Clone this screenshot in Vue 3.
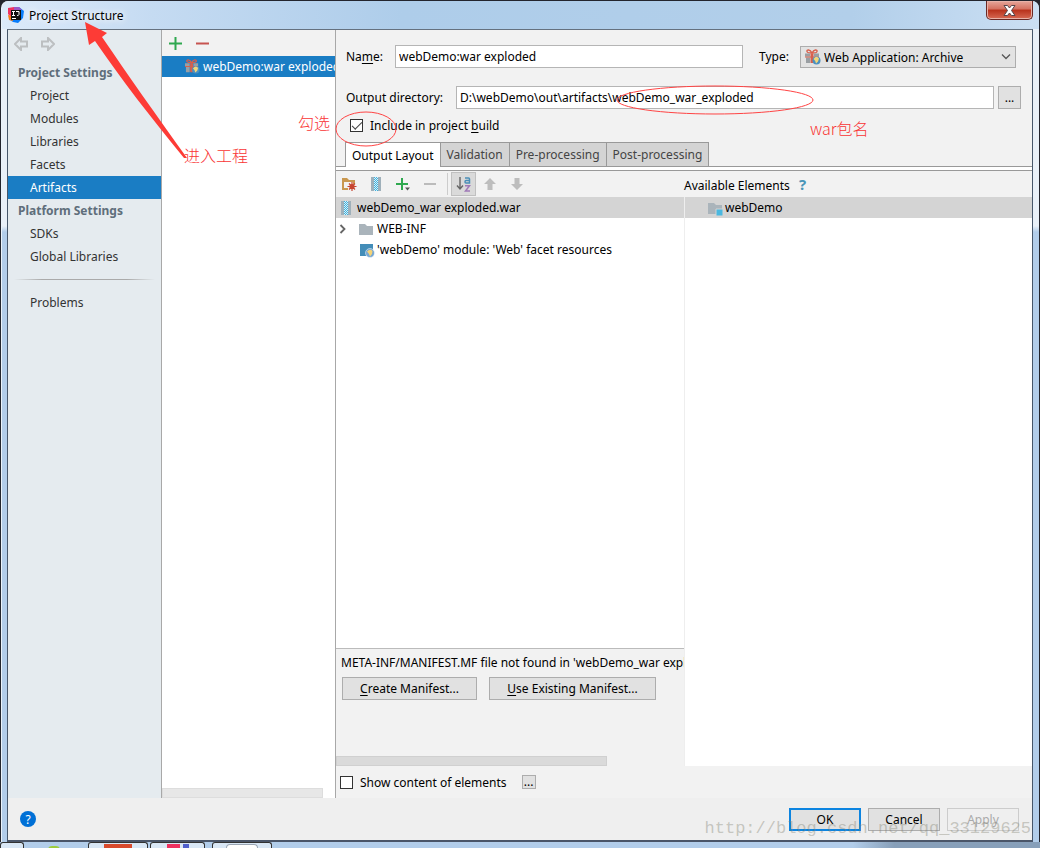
<script setup>
import { ref } from 'vue'

const projectItems = ['Project', 'Modules', 'Libraries', 'Facets', 'Artifacts']
const platformItems = ['SDKs', 'Global Libraries']
const selected = ref('Artifacts')
const tabs = ['Output Layout', 'Validation', 'Pre-processing', 'Post-processing']
const activeTab = ref('Output Layout')
const name = ref('webDemo:war exploded')
const directory = ref('D:\\webDemo\\out\\artifacts\\webDemo_war_exploded')
const includeInBuild = ref(true)
const showContent = ref(false)
</script>

<template>
  <div class="screen">
    <svg class="defs" aria-hidden="true">
      <defs>
        <symbol id="gift" viewBox="0 0 16 16">
          <path d="M7 4C5 0 1.500 .5 2 2.600C2.300 3.800 5 4 7 4C9 4 11.700 3.800 12 2.600C12.500 .5 9 0 7 4Z" fill="none" stroke="#d8604c" stroke-width="1.400" />
          <path d="M0 4.500h5v3H0zM9 4.500h5v3H9zM1 8.500h4V14H1zM9 8.500h4V14H9z" fill="#9a9fa3" />
          <path d="M5.500 4.500h3V14h-3zM0 7.500h14v1H0z" fill="#d8604c" />
          <circle cx="11.500" cy="11.500" r="4" fill="#4a90c2" />
          <path d="M8.500 10q3-4 5.500-.5l-1 3-2 2-.8-2.500z" fill="#f3d678" />
        </symbol>
        <symbol id="archive" viewBox="0 0 12 16">
          <path d="M1 1h10v14H1z" fill="#9fb0ba" />
          <path d="M4 1h4v14H4z" fill="#d9f1fa" />
          <path d="M4 1h1v1H4zM6 1h1v1H6zM5 2h1v1H5zM7 2h1v1H7zM4 3h1v1H4zM6 3h1v1H6zM5 4h1v1H5zM7 4h1v1H7zM4 5h1v1H4zM6 5h1v1H6zM5 6h1v1H5zM7 6h1v1H7zM4 7h1v1H4zM6 7h1v1H6zM5 8h1v1H5zM7 8h1v1H7zM4 9h1v1H4zM6 9h1v1H6zM5 10h1v1H5zM7 10h1v1H7zM4 11h1v1H4zM6 11h1v1H6zM5 12h1v1H5zM7 12h1v1H7zM4 13h1v1H4zM6 13h1v1H6zM5 14h1v1H5zM7 14h1v1H7z" fill="#3fb0dd" />
        </symbol>
        <symbol id="folder" viewBox="0 0 16 16">
          <path d="M1 3h6l2 2h6v9H1z" fill="#aab4bb" />
        </symbol>
        <symbol id="arrow" viewBox="0 0 14 14">
          <path d="M1 7l6-6v3.500h6v5H7V13z" />
        </symbol>
      </defs>
    </svg>

    <div class="window">
      <header class="titlebar">
        <svg class="logo" width="16" height="16" viewBox="0 0 16 16">
          <path d="M0 1L6 0l3 4-5 9-3-1 1-3-2-2z" fill="#ee315f" />
          <path d="M7 0l4 0 5 4-1 7-5 5-5-1-3-2 8-6z" fill="#087cfa" />
          <path d="M0 8l4 1 1 5-4-1z" fill="#f97a12" />
          <path d="M6 0l5 0 3 3H6z" fill="#9b55c4" />
          <path d="M3 3h10v10H3z" fill="#101010" />
          <path d="M4 4.500h3M5.500 4.500v4M4 8.500h3M8 4.500h3v3q0 1-2 1M4 11.500h4" stroke="#fff" fill="none" />
        </svg>
        <h1>Project Structure</h1>
        <button class="close" aria-label="Close">
          <svg width="13" height="11" viewBox="0 0 13 11">
            <path d="M1 .5h3.500L6.500 3 8.500 .5H12L8.500 5.500 12 10.500H8.500L6.500 8 4.500 10.500H1L4.500 5.500z" fill="#fff" stroke="#55454a" />
          </svg>
        </button>
      </header>

      <div class="client">
        <div class="columns">
          <nav class="sidebar">
            <div class="history">
              <button aria-label="Back"><svg width="14" height="14"><use href="#arrow" /></svg></button>
              <button aria-label="Forward"><svg class="flip" width="14" height="14"><use href="#arrow" /></svg></button>
            </div>
            <h2>Project Settings</h2>
            <a v-for="i in projectItems" :key="i" href="#" :class="{ on: i === selected }" @click.prevent="selected = i">{{ i }}</a>
            <h2>Platform Settings</h2>
            <a v-for="i in platformItems" :key="i" href="#" :class="{ on: i === selected }" @click.prevent="selected = i">{{ i }}</a>
            <div class="rule"></div>
            <a href="#" @click.prevent="selected = 'Problems'">Problems</a>
          </nav>

          <section class="artifacts">
            <div class="list-tools">
              <button aria-label="Add"><svg width="13" height="13"><path d="M6.500 0v13M0 6.500h13" stroke="#2fa84f" stroke-width="2" /></svg></button>
              <button aria-label="Remove"><svg width="13" height="13"><path d="M0 6.500h13" stroke="#c75450" stroke-width="2" /></svg></button>
            </div>
            <div class="artifact">
              <svg width="15" height="15"><use href="#gift" /></svg>
              <span>webDemo:war exploded</span>
            </div>
            <div class="fill"></div>
            <div class="list-scroll"></div>
          </section>

          <main class="editor">
            <div class="row name-row">
              <label for="name">Na<u>m</u>e:</label>
              <input id="name" v-model="name" type="text" />
              <label for="type">Type:</label>
              <div class="select">
                <select id="type">
                  <option>Web Application: Archive</option>
                </select>
                <svg class="gift" width="16" height="16"><use href="#gift" /></svg>
                <svg class="chevron" width="10" height="6"><path d="M1 .5l4 4 4-4" fill="none" stroke="#555" stroke-width="1.300" /></svg>
              </div>
            </div>
            <div class="row dir-row">
              <label for="dir">Output directory:</label>
              <input id="dir" v-model="directory" type="text" />
              <button class="btn browse" aria-label="Browse">...</button>
            </div>
            <div class="check-row">
              <input id="include" v-model="includeInBuild" type="checkbox" />
              <label for="include">Include in project <u>b</u>uild</label>
            </div>
            <div class="tabs" role="tablist">
              <button v-for="t in tabs" :key="t" role="tab" :aria-selected="t === activeTab" :class="{ on: t === activeTab }" @click="activeTab = t">{{ t }}</button>
            </div>

            <div class="panes">
              <section class="layout">
                <div class="tools">
                  <button aria-label="New folder">
                    <svg width="16" height="16">
                      <path d="M1 2h5l2 2h6v4h-2V6H3v6h4v2H1z" fill="#c9974f" />
                      <path d="M11 6v9M6.500 10.500h9M8 7.500l6 6M14 7.500l-6 6" stroke="#c7452f" stroke-width="1.200" />
                      <circle cx="11" cy="10.500" r="2.600" fill="#c7452f" />
                    </svg>
                  </button>
                  <button aria-label="New archive"><svg width="12" height="16"><use href="#archive" /></svg></button>
                  <button aria-label="Add copy of">
                    <svg width="16" height="16"><path d="M7 2v12M1 8h12" stroke="#2fa84f" stroke-width="2" /><path d="M10 11.500h5l-2.500 3z" fill="#555" /></svg>
                  </button>
                  <button aria-label="Remove element"><svg width="12" height="16"><path d="M0 8h12" stroke="#bbb" stroke-width="2" /></svg></button>
                  <span class="divider"></span>
                  <button class="pressed" aria-label="Sort elements">
                    <svg width="16" height="18" viewBox="0 0 16 18">
                      <path d="M4 2v12M1 10.500l3 3.500 3-3.500" fill="none" stroke="#666" stroke-width="1.400" />
                      <path d="M9 3h3.500q1 0 1 1v4H10q-1 0-1-1 0-1.500 1-1.500h3.500" fill="none" stroke="#4a8fb8" stroke-width="1.500" />
                      <path d="M9 10.800h4.500L9.500 16H14" fill="none" stroke="#a07ab8" stroke-width="1.500" />
                    </svg>
                  </button>
                  <button aria-label="Move up"><svg class="up" width="14" height="14"><use href="#arrow" fill="#bdbdbd" /></svg></button>
                  <button aria-label="Move down"><svg class="down" width="14" height="14"><use href="#arrow" fill="#bdbdbd" /></svg></button>
                </div>
                <ul class="tree">
                  <li class="root on"><svg width="12" height="16"><use href="#archive" /></svg>webDemo_war exploded.war</li>
                  <li class="branch">
                    <svg width="8" height="10"><path d="M1.500 1l4 4-4 4" fill="none" stroke="#666" stroke-width="1.800" /></svg>
                    <svg width="16" height="16"><use href="#folder" /></svg>WEB-INF
                  </li>
                  <li class="leaf">
                    <svg width="16" height="16">
                      <path d="M1 2h13v12H1z" fill="#438db8" />
                      <circle cx="11" cy="11" r="4.500" fill="#76a7d3" stroke="#fff" stroke-width=".5" />
                      <path d="M8 9.500q3-3 5.500-.5l-.5 3-2 2.500-1-2.500z" fill="#f5d377" />
                    </svg>'webDemo' module: 'Web' facet resources
                  </li>
                </ul>
                <div class="manifest">
                  <p>META-INF/MANIFEST.MF file not found in 'webDemo_war exploded.war'</p>
                  <div class="manifest-actions">
                    <button class="btn create"><u>C</u>reate Manifest...</button>
                    <button class="btn existing"><u>U</u>se Existing Manifest...</button>
                  </div>
                  <div class="hscroll"></div>
                </div>
              </section>

              <section class="available">
                <div class="available-head">Available Elements <a href="#" aria-label="Help on available elements" @click.prevent>?</a></div>
                <ul class="tree">
                  <li class="module on">
                    <svg width="16" height="16"><use href="#folder" /><path d="M9 9h7v7H9z" fill="#4ab8e0" stroke="#d4d4d4" /></svg>webDemo
                  </li>
                </ul>
              </section>
            </div>

            <div class="content-row">
              <input id="content" v-model="showContent" type="checkbox" />
              <label for="content">Show content of elements</label>
              <button class="btn more" aria-label="Content options">...</button>
            </div>
          </main>
        </div>

        <footer class="footer">
          <button class="help" aria-label="Help">?</button>
          <button class="btn ok">OK</button>
          <button class="btn">Cancel</button>
          <button class="btn" disabled>Apply</button>
        </footer>
      </div>
    </div>

    <div class="taskbar">
      <span class="task first"></span>
      <span class="green"></span>
      <span class="task app"><i class="red"></i></span>
      <span class="task idea"><i class="pink"></i><i class="blue"></i></span>
      <span class="task cloud"><i class="white"></i></span>
    </div>

    <svg class="marks" width="1040" height="848" viewBox="0 0 1040 848" aria-hidden="true">
      <path d="M85 22L107 33 102 37C128 75 156 115 187 158L184 158C152 119 121 79 95 41L89 45z" fill="#fd3b36" />
      <ellipse cx="366" cy="129" rx="30" ry="17" />
      <ellipse cx="715" cy="100" rx="98" ry="14" />
    </svg>
    <span class="note enter">进入工程</span>
    <span class="note tick">勾选</span>
    <span class="note package">war包名</span>
    <span class="watermark">http://blog.csdn.net/qq_33129625</span>
  </div>
</template>

<style>
body {
  margin: 0;
}
</style>

<style scoped>
* {
  box-sizing: border-box;
}
.screen {
  position: relative;
  min-height: 100vh;
  display: flex;
  flex-direction: column;
  overflow: hidden;
  background: #23252e;
  font: 12px/21px "Noto Sans", "Open Sans", "Noto Sans CJK SC", sans-serif;
  color: #000;
}
.defs {
  position: absolute;
  width: 0;
  height: 0;
}
button,
input,
select {
  font: inherit;
  color: inherit;
  margin: 0;
}
button {
  display: flex;
  align-items: center;
  justify-content: center;
  padding: 0;
  border: 0;
  background: none;
}
svg {
  flex: none;
}
u {
  text-underline-offset: 2px;
}
.window {
  flex: 1;
  display: flex;
  flex-direction: column;
  margin: 1px 1px 0;
  padding: 0 6px 0 5px;
  border-radius: 7px 7px 0 0;
  border-left: 1px solid #eaf3fb;
  background: linear-gradient(#e9f0f8 0, #e9f0f8 225px, #b2cdea 231px);
  background-origin: border-box;
}
.titlebar {
  display: flex;
  align-items: center;
  height: 28px;
  margin: 0 -6px 0 -5px;
  padding: 0 6px;
  border-radius: 7px 7px 0 0;
  background: linear-gradient(90deg, #dceafa 0, #c5dbf2 150px, #aecdea 400px, #b2cfea 82%, #cbdff3);
}
h1 {
  flex: 1;
  margin: 0 0 0 5px;
  font-size: 12px;
  font-weight: 400;
  color: #000;
  text-shadow: 0 0 6px #fff, 0 0 10px #fff;
}
.close {
  align-self: flex-start;
  width: 47px;
  height: 19px;
  border: 1px solid #6a2925;
  border-top: 0;
  border-radius: 0 0 5px 5px;
  background: linear-gradient(#e6a79b 0, #d4705f 45%, #b8311b 50%, #d76a54);
  box-shadow: inset 0 0 0 1px #e8b2a8;
}
.client {
  flex: 1;
  display: flex;
  flex-direction: column;
  border: 1px solid #46566a;
  border-top-color: #65717f;
  border-bottom: 2px solid #4a5568;
  background: #efefef;
}
.columns {
  flex: 1;
  display: grid;
  grid-template-columns: 154px 174px minmax(0, 1fr);
}
.sidebar {
  display: flex;
  flex-direction: column;
  border-right: 1px solid #a8a8a8;
  background: #e5ebef;
}
.history {
  display: flex;
  gap: 13px;
  height: 31px;
  padding: 0 0 4px 6px;
  fill: none;
  stroke: #bcbfc1;
  stroke-width: 2;
}
.flip {
  transform: rotate(180deg);
}
.up {
  transform: rotate(90deg);
}
.down {
  transform: rotate(-90deg);
}
.sidebar h2 {
  margin: 0;
  padding-left: 10px;
  font-size: 12px;
  line-height: 23px;
  color: #5f6e7b;
}
.sidebar a {
  padding-left: 22px;
  line-height: 23px;
  color: #333;
  text-decoration: none;
}
.sidebar a.on {
  background: #1a7dc4;
  color: #fff;
}
.rule {
  height: 1px;
  margin: 11px 6px;
  background: linear-gradient(90deg, transparent, #aaa 20%, #aaa 80%, transparent);
}
.artifacts {
  display: flex;
  flex-direction: column;
  border-right: 1px solid #a8a8a8;
  background: #fff;
}
.list-tools {
  display: flex;
  gap: 14px;
  height: 26px;
  padding-left: 7px;
  background: #f2f2f2;
}
.artifact {
  display: flex;
  align-items: center;
  gap: 3px;
  height: 21px;
  padding-left: 23px;
  overflow: hidden;
  white-space: nowrap;
  background: #1a7dc4;
  color: #fff;
}
.fill {
  flex: 1;
}
.list-scroll {
  height: 10px;
  margin-right: 12px;
  border: 1px solid #ddd;
  background: #e7e7e7;
}
.editor {
  display: flex;
  flex-direction: column;
  background: #f2f2f2;
}
.row {
  display: flex;
  align-items: center;
  padding-left: 10px;
}
input[type="text"] {
  flex: 1;
  min-width: 0;
  height: 23px;
  padding: 0 3px;
  border: 1px solid #b5b5b5;
  background: #fff;
}
.name-row {
  margin-top: 15px;
  padding-right: 16px;
}
.name-row label:first-child {
  width: 49px;
}
.name-row label:nth-of-type(2) {
  width: 57px;
  padding-left: 16px;
}
.select {
  position: relative;
  width: 216px;
}
select {
  appearance: none;
  display: block;
  width: 100%;
  height: 22px;
  padding: 0 24px 0 23px;
  border: 1px solid #adadad;
  border-radius: 0;
  background: #e3e3e3;
}
.gift {
  position: absolute;
  left: 5px;
  top: 3px;
}
.chevron {
  position: absolute;
  right: 5px;
  top: 8px;
}
.dir-row {
  margin-top: 18px;
  padding-right: 11px;
}
.dir-row label {
  width: 110px;
}
.btn {
  border: 1px solid #adadad;
  background: #e1e1e1;
}
.browse {
  width: 23px;
  height: 23px;
  margin-left: 4px;
}
.check-row {
  display: flex;
  align-items: center;
  gap: 7px;
  height: 33px;
  padding-left: 14px;
}
input[type="checkbox"] {
  appearance: none;
  display: grid;
  place-items: center;
  width: 13px;
  height: 13px;
  border: 1px solid #333;
  background: #fff;
}
input[type="checkbox"]:checked::after {
  content: "";
  width: 9px;
  height: 4px;
  margin-bottom: 3px;
  border: solid #444;
  border-width: 0 0 1px 1px;
  transform: rotate(-45deg);
}
.tabs {
  display: flex;
  padding-left: 9px;
  border-bottom: 1px solid #999;
}
.tabs button {
  height: 24px;
  padding: 0 6px;
  border: 1px solid #999;
  border-width: 1px 1px 0 0;
  background: #d4d4d4;
  color: #444;
  white-space: nowrap;
}
.tabs .on {
  border-left-width: 1px;
  margin-bottom: -1px;
  height: 25px;
  background: #fff;
  color: #000;
}
.panes {
  flex: 1;
  display: grid;
  grid-template-columns: minmax(0, 1fr) minmax(0, 1fr);
  border-top: 1px solid #999;
  box-shadow: 0 -3px #fff;
  margin-top: 3px;
}
.layout {
  display: flex;
  flex-direction: column;
  background: #fff;
}
.tools {
  display: flex;
  align-items: center;
  height: 26px;
  padding-left: 5px;
  background: #f2f2f2;
}
.tools button {
  width: 27px;
  height: 24px;
}
.tools button:first-child {
  width: 16px;
  margin-right: 5px;
}
.divider {
  width: 1px;
  height: 22px;
  margin: 0 3px 0 4px;
  background: #ccc;
}
.tools .pressed {
  width: 25px;
  border: 1px solid #c0c0c0;
  background: #dadada;
}
.tree {
  margin: 0;
  padding: 0;
  list-style: none;
}
.tree li {
  display: flex;
  align-items: center;
  height: 21px;
  white-space: nowrap;
}
.tree .on {
  background: #d4d4d4;
}
.root {
  gap: 5px;
  padding-left: 4px;
}
.branch {
  gap: 3px;
  padding-left: 3px;
}
.branch svg:first-child {
  margin-right: 8px;
}
.leaf {
  gap: 2px;
  padding-left: 23px;
}
.module {
  gap: 2px;
  padding-left: 22px;
}
.manifest {
  display: flex;
  flex-direction: column;
  height: 118px;
  margin-top: auto;
  border-top: 1px solid #bbb;
  background: #f2f2f2;
}
.manifest p {
  margin: 3px 0 4px;
  padding-left: 5px;
  overflow: hidden;
  white-space: nowrap;
}
.manifest-actions {
  display: flex;
  gap: 12px;
  padding-left: 6px;
}
.manifest-actions .btn {
  display: block;
  height: 23px;
  line-height: 20px;
}
.create {
  width: 135px;
}
.existing {
  width: 167px;
}
.hscroll {
  width: 78%;
  height: 10px;
  margin-top: auto;
  border: 1px solid #d0d0d0;
  background: #dadada;
}
.available {
  border-left: 1px solid #eee;
  background: #fff;
}
.available-head {
  height: 26px;
  margin-left: -1px;
  line-height: 26px;
  background: #f2f2f2;
}
.available-head a {
  margin-left: 6px;
  font-size: 15px;
  font-weight: 700;
  color: #4a95b8;
  text-decoration: none;
}
.content-row {
  display: flex;
  align-items: center;
  gap: 7px;
  height: 32px;
  padding-left: 4px;
}
.more {
  width: 14px;
  height: 14px;
  margin-left: 8px;
  line-height: 10px;
}
.footer {
  display: flex;
  align-items: center;
  gap: 7px;
  height: 42px;
  padding: 0 13px 0 12px;
}
.help {
  width: 16px;
  height: 16px;
  margin-right: auto;
  border-radius: 50%;
  background: #0070d6;
  color: #fff;
}
.footer .btn {
  width: 72px;
  height: 23px;
}
.footer .ok {
  border: 2px solid #0c84e0;
}
.footer .btn:disabled {
  border-color: #ccc;
  background: #efefef;
  color: #aaa;
}
.taskbar {
  display: flex;
  height: 6px;
  overflow: hidden;
  background: linear-gradient(90deg, #b2cdea 82%, #879fb9 86%);
}
.task {
  display: flex;
  justify-content: center;
  margin-right: 2px;
  border: 1px solid #333;
  border-bottom: 0;
  border-radius: 3px 3px 0 0;
  background: #d9e7f5;
}
.task i {
  align-self: flex-end;
  height: 4px;
}
.first {
  width: 24px;
}
.green {
  width: 12px;
  height: 4px;
  margin: 4px 28px 0 22px;
  border-radius: 6px 6px 0 0;
  background: #9ccc3c;
}
.app {
  width: 60px;
}
.idea {
  width: 55px;
  margin-right: 7px;
}
.cloud {
  width: 60px;
}
.task .red {
  width: 28px;
  background: #d84a2c;
}
.task .pink {
  width: 13px;
  margin-right: 3px;
  background: #ee315f;
}
.task .blue {
  width: 6px;
  background: #5060cc;
}
.task .white {
  width: 32px;
  border: 1px solid #9aa6b4;
  border-bottom: 0;
  border-radius: 6px 6px 0 0;
  background: #fff;
}
.marks {
  position: absolute;
  top: 0;
  left: 0;
  pointer-events: none;
  fill: none;
}
.marks ellipse {
  stroke: #f44;
}
.note {
  position: absolute;
  font: 16px/20px "Noto Sans CJK SC", sans-serif;
  font-weight: 300;
  color: #f93434;
  pointer-events: none;
}
.enter {
  left: 184px;
  top: 145px;
}
.tick {
  left: 298px;
  top: 112px;
}
.package {
  left: 810px;
  top: 118px;
}
.watermark {
  position: absolute;
  right: 9px;
  bottom: 9px;
  font: 17px/20px "Liberation Mono", monospace;
  color: rgba(130, 130, 115, 0.4);
  pointer-events: none;
}
</style>
